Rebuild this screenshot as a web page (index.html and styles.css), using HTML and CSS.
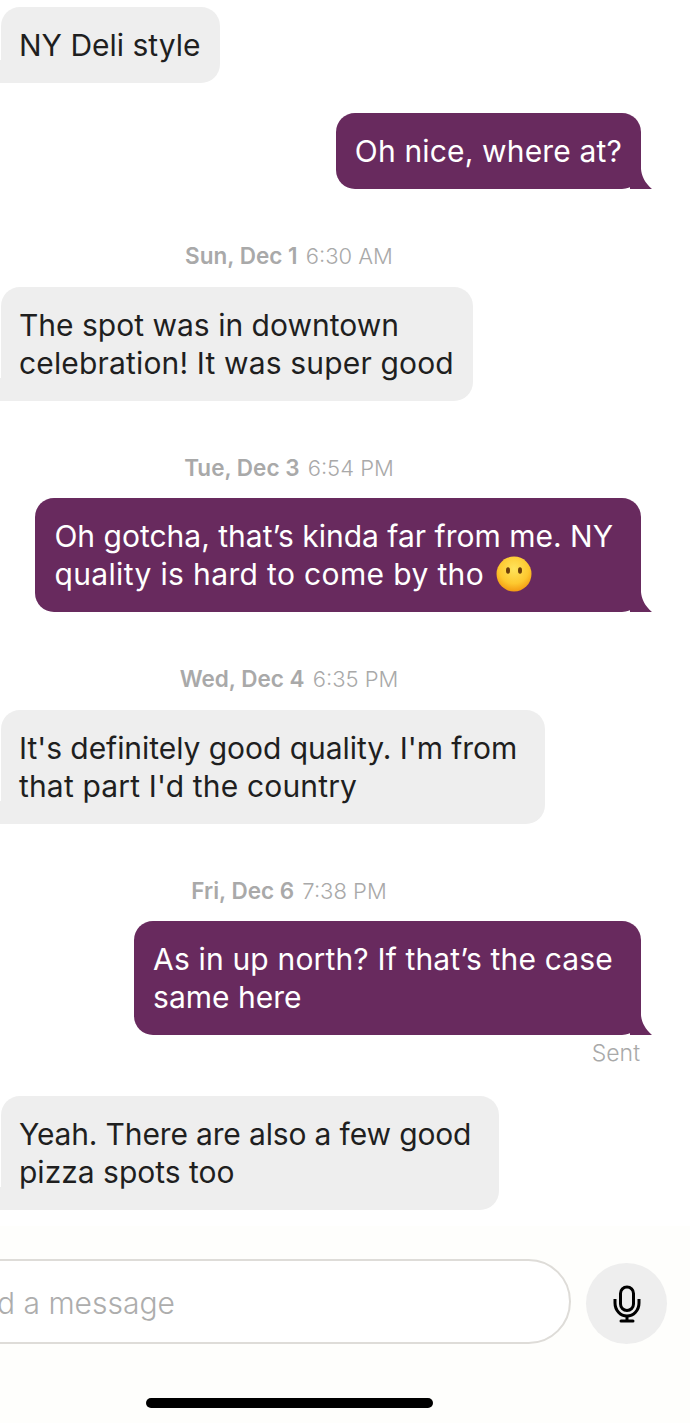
FILE: index.html
```html
<!DOCTYPE html>
<html lang="en">
<head>
    <meta charset="UTF-8">
    <meta name="viewport" content="width=device-width, initial-scale=1.0">
    <title>Messages</title>
    <link rel="stylesheet" href="styles.css">
</head>

<body>
<section class="thread">
    <div class="bubble received">NY Deli style</div>
    <div class="bubble sent tight"><span class="loose">Oh nice, where at?</span></div>

    <div class="stamp"><b>Sun, Dec 1</b> 6:30 AM</div>
    <div class="bubble received">The spot was in downtown<br><span class="loose">celebration! It was super good</span></div>

    <div class="stamp"><b>Tue, Dec 3</b> 6:54 PM</div>
    <div class="bubble sent wrapped">Oh gotcha, that’s kinda far from me. NY<br><span class="looser">quality is hard to come by tho</span>
        <svg class="emoji" viewBox="0 0 36 36" aria-hidden="true">
            <defs>
                <radialGradient id="face" cx="50%" cy="35%" r="65%">
                    <stop offset="0%" stop-color="#ffe45c"/>
                    <stop offset="65%" stop-color="#fdc82f"/>
                    <stop offset="100%" stop-color="#f39a12"/>
                </radialGradient>
            </defs>
            <circle cx="18" cy="18" r="17.5" fill="url(#face)"/>
            <ellipse cx="12" cy="14.5" rx="2" ry="3.2" fill="#6b3d0a"/>
            <ellipse cx="24" cy="14.5" rx="2" ry="3.2" fill="#6b3d0a"/>
        </svg>
    </div>

    <div class="stamp"><b>Wed, Dec 4</b> 6:35 PM</div>
    <div class="bubble received wrapped"><span class="nudge">It's definitely good quality. I'm from</span><br><span class="loose">that part I'd the country</span></div>

    <div class="stamp"><b>Fri, Dec 6</b> 7:38 PM</div>
    <div class="bubble sent wrapped"><span class="loose">As in up north? If that’s the case</span><br>same here</div>
    <div class="status">Sent</div>

    <div class="bubble received wrapped last"><span class="snug">Yeah. There are also a few good</span><br>pizza spots too</div>
</section>

<footer class="composer">
    <div class="row">
        <div class="input">Send a message</div>
        <button class="mic" aria-label="Record">
            <svg viewBox="0 0 28 38" width="28" height="38" fill="none" stroke="#000" stroke-width="3">
                <rect x="7.5" y="2" width="13" height="23.5" rx="6.5"/>
                <path d="M2 14v4a12 13 0 0 0 24 0v-4"/>
                <path d="M14 31v5"/>
                <path d="M8 36h12" stroke-linecap="round"/>
            </svg>
        </button>
    </div>
    <div class="homeBar"></div>
</footer>
</body>
</html>
```

FILE: styles.css
```css
* {
    margin: 0;
    padding: 0;
    box-sizing: border-box;
    font-family: 'Inter', sans-serif;
}

html, body {
    width: 690px;
    height: 1423px;
    overflow: hidden;
}

body {
    background: #fefefc;
}

.thread {
    display: flex;
    flex-direction: column;
    align-items: flex-start;
    height: 1226px;
    padding-top: 7px;
    background: #fff;
}

.bubble {
    position: relative;
    padding: 19px;
    font-size: 30px;
    line-height: 38px;
    border-radius: 19px;
    white-space: nowrap;
}

.wrapped {
    padding-right: 28px;
}

.loose {
    letter-spacing: 0.16px;
}

.looser {
    letter-spacing: 0.36px;
}

.nudge {
    letter-spacing: -0.05px;
}

.snug {
    letter-spacing: -0.15px;
}

.received {
    margin-left: 1px;
    padding-left: 18px;
    background: #eeeeee;
    color: #1f1f1f;
}

.sent {
    align-self: flex-end;
    margin-right: 49px;
    background: #682a5e;
    color: #fff;
}

/* tail off the bottom corner */
.bubble::after {
    content: '';
    position: absolute;
    bottom: 0;
    background: inherit;
}

.sent::after {
    right: -11px;
    width: 22px;
    height: 20px;
    clip-path: path('M0 0H11C11.5 7 15 14 22 20H0Z');
}

/* the received tail runs off the left of the screen */
.received::after {
    left: -1px;
    width: 20px;
    height: 23px;
}

.tight {
    margin-top: 30px;
}

.stamp {
    align-self: center;
    margin-top: 53px;
    margin-right: 112px;
    margin-bottom: 16.5px;
    font-size: 22px;
    font-weight: 300;
    line-height: 28px;
    color: #a9a9a9;
}

.stamp b {
    margin-right: 2px;
    font-size: 22.5px;
    font-weight: 600;
}

.status {
    align-self: flex-end;
    margin-top: 4px;
    margin-right: 50px;
    font-size: 23px;
    font-weight: 300;
    line-height: 28px;
    color: #a9a9a9;
}

.last {
    margin-top: 29px;
}

.emoji {
    width: 36px;
    height: 36px;
    vertical-align: -7px;
    margin-left: 4px;
}

.composer {
    padding-top: 33px;
}

.row {
    display: flex;
    align-items: flex-end;
    gap: 15px;
}

.input {
    width: 647px;
    height: 85px;
    margin-left: -76px;
    padding-top: 2px;
    padding-left: 17px;
    flex-shrink: 0;
    display: flex;
    align-items: center;
    background: #fff;
    border: 2px solid #dedcd8;
    border-radius: 43px;
    font-size: 30px;
    font-weight: 300;
    color: #adadad;
}

.mic {
    width: 81px;
    height: 81px;
    flex-shrink: 0;
    display: flex;
    justify-content: center;
    align-items: center;
    background: #eeeeee;
    border: none;
    border-radius: 50%;
}

.homeBar {
    width: 287px;
    height: 10px;
    margin: 54px 0 0 146px;
    background: #000;
    border-radius: 5px;
}
```
